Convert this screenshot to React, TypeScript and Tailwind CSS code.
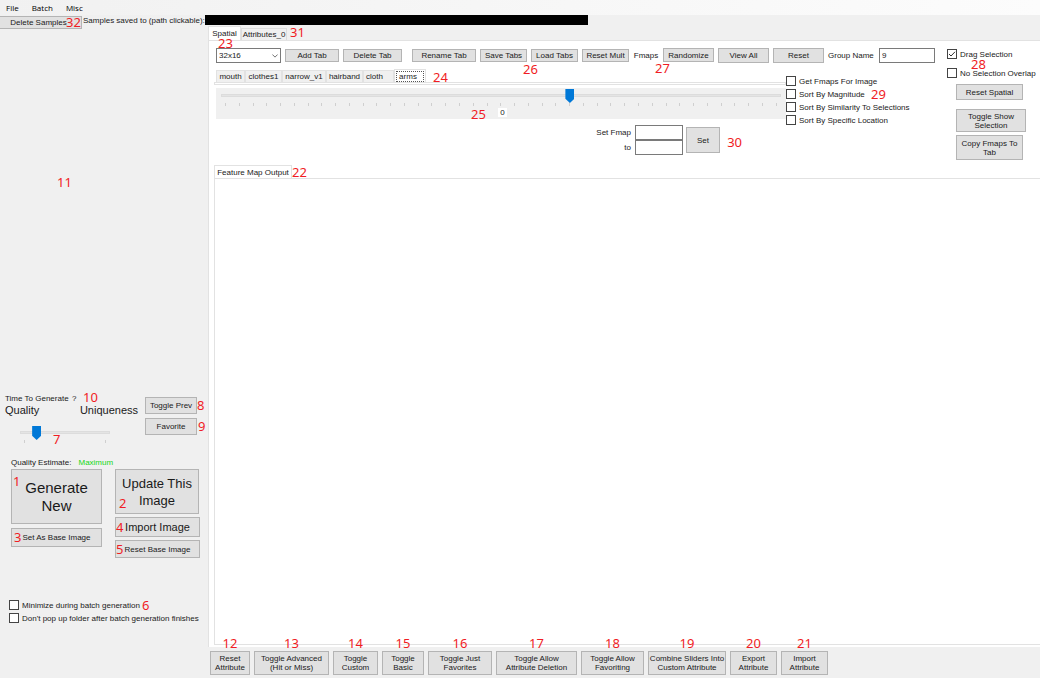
import React from "react";

function Note({ n, className }: { n: number; className: string }) {
  return (
    <span
      className={`pointer-events-none absolute z-10 font-['Noto_Sans',sans-serif] text-[13px] leading-[13px] text-[#f01c24] ${className}`}
    >
      {n}
    </span>
  );
}

function Btn({ children, className = "" }: { children: React.ReactNode; className?: string }) {
  return (
    <button
      type="button"
      className={`flex shrink-0 items-center justify-center border border-[#b4b4b4] bg-[#e1e1e1] text-center whitespace-nowrap ${className}`}
    >
      {children}
    </button>
  );
}

function Check({ label, checked = false, className = "" }: { label: string; checked?: boolean; className?: string }) {
  return (
    <label className={`flex h-[10px] items-center gap-[3px] whitespace-nowrap ${className}`}>
      <span className="relative flex size-[10px] shrink-0">
        <input
          type="checkbox"
          defaultChecked={checked}
          className="peer size-[10px] appearance-none border border-[#444] bg-white"
        />
        <svg
          viewBox="0 0 10 10"
          className="pointer-events-none absolute inset-0 hidden size-[10px] peer-checked:block"
          fill="none"
          stroke="#333"
          strokeWidth="1"
        >
          <path d="M2 5 L4 7 L8 2.8" />
        </svg>
      </span>
      {label}
    </label>
  );
}

function Track({ label, max, value, ticks }: { label: string; max: number; value: number; ticks: number }) {
  return (
    <div>
      <div className="relative flex h-[14px] items-center">
        <div className="absolute inset-x-0 top-[5px] h-[3px] border border-[#dcdcdc] bg-[#e4e4e4]" />
        <input
          type="range"
          aria-label={label}
          min={0}
          max={max}
          defaultValue={value}
          className="relative m-0 h-[14px] w-full appearance-none bg-transparent [&::-webkit-slider-thumb]:h-[14px] [&::-webkit-slider-thumb]:w-[9px] [&::-webkit-slider-thumb]:appearance-none [&::-webkit-slider-thumb]:bg-[#0078d7] [&::-webkit-slider-thumb]:[clip-path:polygon(0_0,100%_0,100%_70%,50%_100%,0_70%)]"
        />
      </div>
      <div className="flex justify-between px-1">
        {Array.from({ length: ticks }, (_, i) => (
          <span key={i} className="h-[3px] w-px bg-[#cfcfcf]" />
        ))}
      </div>
    </div>
  );
}

const layerTabs = [
  { name: "mouth", width: "w-[29px]" },
  { name: "clothes1", width: "w-[37px]" },
  { name: "narrow_v1", width: "w-[44px]" },
  { name: "hairband", width: "w-[37px]" },
  { name: "cloth", width: "w-[31px] pr-2" },
];

const attributeActions = [
  { n: 12, lines: ["Reset", "Attribute"], className: "w-[40px]" },
  { n: 13, lines: ["Toggle Advanced", "(Hit or Miss)"], className: "w-[75px]" },
  { n: 14, lines: ["Toggle", "Custom"], className: "w-[45px]" },
  { n: 15, lines: ["Toggle", "Basic"], className: "w-[42px]" },
  { n: 16, lines: ["Toggle Just", "Favorites"], className: "w-[64px]" },
  { n: 17, lines: ["Toggle Allow", "Attribute Deletion"], className: "w-[81px]" },
  { n: 18, lines: ["Toggle Allow", "Favoriting"], className: "w-[63px]" },
  { n: 19, lines: ["Combine Sliders Into", "Custom Attribute"], className: "w-[78px]" },
  { n: 20, lines: ["Export", "Attribute"], className: "w-[47px]" },
  { n: 21, lines: ["Import", "Attribute"], className: "w-[47px]" },
];

function Sidebar() {
  return (
    <aside className="flex flex-col">
      <div className="flex items-start gap-px pt-px">
        <div className="relative">
          <Btn className="h-[13px] w-[82px] border-l-0 pr-1">Delete Samples</Btn>
          <Note n={32} className="top-0 left-[66px]" />
        </div>
        <span className="whitespace-nowrap">Samples saved to (path clickable):</span>
      </div>

      <div className="relative flex-1">
        <Note n={11} className="top-[147px] left-[57px]" />
      </div>

      <div className="flex">
        <div className="relative w-[145px] shrink-0 pl-[5px]">
          <div className="flex gap-[6px] whitespace-nowrap">
            <span className="w-[61px]">Time To Generate</span>
            <span>?</span>
          </div>
          <Note n={10} className="-top-[3px] left-[83px]" />
          <div className="mt-px flex justify-between pr-[7px] text-[11px] leading-[13px]">
            <span>Quality</span>
            <span>Uniqueness</span>
          </div>
          <div className="mt-[9px] ml-[15px] w-[90px]">
            <Track label="Quality to uniqueness" max={20} value={3} ticks={2} />
          </div>
          <Note n={7} className="top-[39px] left-[53px]" />
        </div>
        <div className="flex flex-col gap-1 pt-[3px]">
          <div className="relative">
            <Btn className="h-[17px] w-[52px]">Toggle Prev</Btn>
            <Note n={8} className="top-[2px] left-[52px]" />
          </div>
          <div className="relative">
            <Btn className="h-[17px] w-[52px]">Favorite</Btn>
            <Note n={9} className="top-[2px] left-[53px]" />
          </div>
        </div>
      </div>

      <div className="mt-[15px] flex gap-[7px] pl-[11px]">
        <span>Quality Estimate:</span>
        <span className="text-[#14d714]">Maximum</span>
      </div>

      <div className="mt-[2px] flex gap-[13px] pl-[11px]">
        <div className="flex flex-col gap-1">
          <div className="relative">
            <Btn className="h-[55px] w-[91px] text-[15px] leading-[18px]">
              Generate
              <br />
              New
            </Btn>
            <Note n={1} className="top-[6px] left-[2px]" />
          </div>
          <div className="relative">
            <Btn className="h-[19px] w-[91px]">Set As Base Image</Btn>
            <Note n={3} className="top-[3px] left-[3px]" />
          </div>
        </div>
        <div className="flex flex-col gap-[3px]">
          <div className="relative">
            <Btn className="h-[45px] w-[84px] text-[13px] leading-[17px]">
              Update This
              <br />
              Image
            </Btn>
            <Note n={2} className="top-[28px] left-[4px]" />
          </div>
          <div className="relative">
            <Btn className="h-[20px] w-[85px] text-[11px]">Import Image</Btn>
            <Note n={4} className="top-[4px] left-px" />
          </div>
          <div className="relative">
            <Btn className="h-[18px] w-[85px]">Reset Base Image</Btn>
            <Note n={5} className="top-[3px] left-px" />
          </div>
        </div>
      </div>

      <div className="relative mt-[42px] mb-[55px] flex flex-col gap-[3px] pl-[9px]">
        <Check label="Minimize during batch generation" />
        <Check label="Don't pop up folder after batch generation finishes" />
        <Note n={6} className="-top-px left-[142px]" />
      </div>
    </aside>
  );
}

function Toolbar() {
  return (
    <div className="flex h-[28px] items-center gap-1 pl-[2px]">
      <div className="relative">
        <select
          aria-label="Resolution"
          defaultValue="32x16"
          className="block h-[15px] w-[65px] appearance-none border border-[#7a7a7a] bg-white pl-[2px]"
        >
          <option>32x16</option>
        </select>
        <svg viewBox="0 0 8 5" className="pointer-events-none absolute top-[6px] right-[3px] h-[4px] w-[6px]" fill="none" stroke="#444">
          <path d="M0.5 0.5 L4 4 L7.5 0.5" />
        </svg>
        <Note n={23} className="-top-[11px] left-[2px]" />
      </div>
      <Btn className="h-[13px] w-[54px]">Add Tab</Btn>
      <Btn className="h-[13px] w-[59px]">Delete Tab</Btn>
      <Btn className="ml-[6px] h-[13px] w-[64px]">Rename Tab</Btn>
      <Btn className="h-[13px] w-[47px]">Save Tabs</Btn>
      <div className="relative">
        <Btn className="h-[13px] w-[47px]">Load Tabs</Btn>
        <Note n={26} className="top-[14px] -left-[8px]" />
      </div>
      <Btn className="h-[13px] w-[47px]">Reset Mult</Btn>
      <div className="relative w-[26px] text-center">
        Fmaps
        <Note n={27} className="top-[11px] left-[22px]" />
      </div>
      <Btn className="h-[14px] w-[51px]">Randomize</Btn>
      <Btn className="h-[15px] w-[51px]">View All</Btn>
      <Btn className="h-[15px] w-[51px]">Reset</Btn>
      <label className="flex items-center gap-2 whitespace-nowrap">
        <span className="w-[43px]">Group Name</span>
        <input type="text" defaultValue="9" className="h-[15px] w-[56px] border border-[#7a7a7a] bg-white px-[2px]" />
      </label>
    </div>
  );
}

function FmapControls() {
  return (
    <div className="flex">
      <div className="min-w-0 flex-1">
        <div className="relative flex h-[13px] items-end pl-[2px]">
          {layerTabs.map((t) => (
            <button
              key={t.name}
              type="button"
              className={`h-[12px] border border-b-0 border-[#e2e2e2] bg-[#f0f0f0] ${t.width} flex shrink-0 items-center justify-center whitespace-nowrap`}
            >
              {t.name}
            </button>
          ))}
          <button type="button" className="h-[13px] w-[32px] border border-b-0 border-[#e2e2e2] bg-white p-px">
            <span className="block h-[11px] border border-dotted border-[#555] pr-[4px] leading-[9px]">arms</span>
          </button>
          <Note n={24} className="top-[2px] left-[219px]" />
        </div>
        <div className="h-[3px] border border-[#e2e2e2] bg-white" />
        <div className="relative mt-[3px] ml-[2px] h-[31px] bg-[#f0f0f0] px-[5px] pt-px">
          <Track label="Feature multiplier" max={40} value={25} ticks={41} />
          <Note n={25} className="top-[20px] left-[255px]" />
          <span className="absolute top-[20px] left-[282px] w-[9px] bg-white text-center">0</span>
        </div>
        <div className="mt-[6px] flex justify-end pr-[66px]">
          <div className="relative flex items-center gap-[3px]">
            <div className="flex flex-col items-end">
              <label className="flex items-center gap-1">
                Set Fmap
                <input type="text" className="h-[15px] w-[48px] border border-[#7a7a7a] bg-white px-[2px]" />
              </label>
              <label className="flex items-center gap-1">
                to
                <input type="text" className="h-[15px] w-[48px] border border-[#7a7a7a] bg-white px-[2px]" />
              </label>
            </div>
            <Btn className="h-[26px] w-[34px]">Set</Btn>
            <Note n={30} className="top-[11px] -right-[22px]" />
          </div>
        </div>
      </div>
      <div className="relative flex w-[161px] shrink-0 flex-col gap-[3px] pt-[7px]">
        <Check label="Get Fmaps For Image" />
        <Check label="Sort By Magnitude" />
        <Check label="Sort By Similarity To Selections" />
        <Check label="Sort By Specific Location" />
        <Note n={29} className="top-[19px] left-[85px]" />
      </div>
    </div>
  );
}

function SelectionOptions() {
  return (
    <div className="relative w-[93px] shrink-0 pt-2">
      <Check label="Drag Selection" checked />
      <Note n={28} className="top-[17px] left-[24px]" />
      <Check label="No Selection Overlap" className="mt-[9px]" />
      <div className="mt-[6px] pl-[9px]">
        <Btn className="h-[16px] w-[67px]">Reset Spatial</Btn>
        <Btn className="mt-[9px] h-[23px] w-[70px]">
          Toggle Show
          <br />
          Selection
        </Btn>
        <Btn className="mt-[3px] h-[25px] w-[67px]">
          Copy Fmaps To
          <br />
          Tab
        </Btn>
      </div>
    </div>
  );
}

export default function App() {
  return (
    <div className="flex min-h-screen flex-col bg-[#f0f0f0] font-['Liberation_Sans',Arial,sans-serif] text-[8px] leading-[9px] text-[#1a1a1a]">
      <nav className="flex h-[15px] items-center gap-[13px] bg-linear-to-r from-[#f1f1f1] to-[#fcfcfc] pl-[6px] font-['Open_Sans',sans-serif] text-black">
        <button type="button">File</button>
        <button type="button">Batch</button>
        <button type="button">Misc</button>
      </nav>
      <div className="grid flex-1 grid-cols-[208px_minmax(0,1fr)]">
        <Sidebar />
        <main className="flex min-w-0 flex-col">
          <a href="#samples" aria-label="Samples folder" className="-ml-[3px] block h-[10px] w-[383px] bg-black" />
          <div className="relative flex h-[15px] items-end">
            <button type="button" className="h-[14px] w-[33px] border border-b-0 border-[#e2e2e2] bg-white">
              Spatial
            </button>
            <button type="button" className="h-[12px] w-[46px] border border-b-0 border-[#dcdcdc] whitespace-nowrap">
              Attributes_0
            </button>
            <Note n={31} className="top-[1px] left-[82px]" />
          </div>
          <section className="flex flex-1 flex-col border-t border-l border-[#e2e2e2] bg-white pb-[2px] pl-[5px]">
            <div className="flex">
              <div className="min-w-0 flex-1">
                <Toolbar />
                <FmapControls />
              </div>
              <SelectionOptions />
            </div>
            <div className="relative mt-[5px] flex">
              <button type="button" className="h-[13px] w-[78px] border border-b-0 border-[#e2e2e2] bg-white whitespace-nowrap">
                Feature Map Output
              </button>
              <Note n={22} className="top-px left-[78px]" />
            </div>
            <div className="flex-1 border border-r-0 border-[#e2e2e2]" />
          </section>
          <footer className="flex gap-[4px] pt-[4px] pr-2 pb-[3px] pl-[2px]">
            {attributeActions.map((a) => (
              <div key={a.n} className="relative">
                <Btn className={`h-[24px] ${a.className}`}>
                  {a.lines[0]}
                  <br />
                  {a.lines[1]}
                </Btn>
                <Note n={a.n} className="inset-x-0 -top-[14px] text-center" />
              </div>
            ))}
          </footer>
        </main>
      </div>
    </div>
  );
}
